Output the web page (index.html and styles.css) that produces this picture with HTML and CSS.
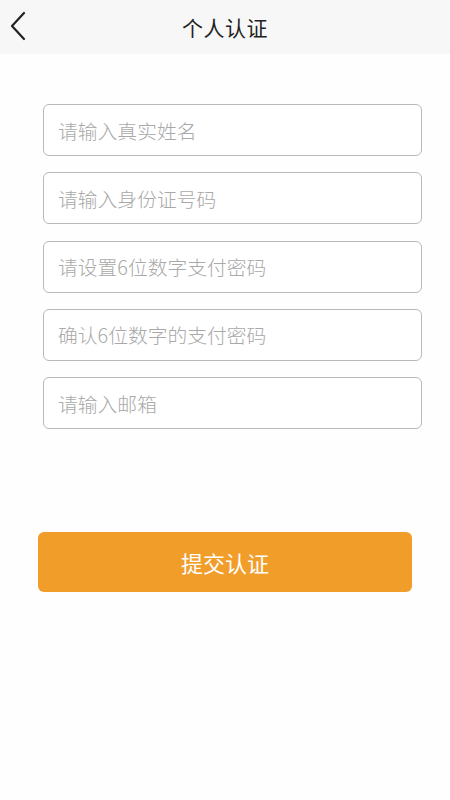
FILE: index.html
```html
<!DOCTYPE html>
<html lang="zh">
<head>
<meta charset="utf-8">
<title>个人认证</title>
<link rel="stylesheet" href="styles.css">
</head>
<body>
<div class="page">
  <header class="nav">
    <span class="back">
      <svg width="20" height="30" viewBox="0 0 20 30"><path d="M15 2 L3 15 L15 28" fill="none" stroke="#222" stroke-width="2.2" stroke-linecap="round" stroke-linejoin="round"/></svg>
    </span>
    <h1 class="title">个人认证</h1>
  </header>
  <form class="form">
    <input class="field" type="text" placeholder="请输入真实姓名">
    <input class="field" type="text" placeholder="请输入身份证号码">
    <input class="field" type="password" placeholder="请设置6位数字支付密码">
    <input class="field" type="password" placeholder="确认6位数字的支付密码">
    <input class="field" type="text" placeholder="请输入邮箱">
  </form>
  <div class="actions">
    <button class="submit" type="button">提交认证</button>
  </div>
</div>
</body>
</html>
```
FILE: styles.css
```css
* { box-sizing: border-box; }
html, body { margin: 0; padding: 0; background: #fefefe; }
body { font-family: "Noto Sans CJK SC", "Noto Sans", sans-serif; }
.page { width: 450px; min-height: 800px; }
.nav {
  position: relative;
  height: 54px;
  background: #f7f7f7;
  display: flex;
  align-items: center;
  justify-content: center;
}
.back {
  position: absolute;
  left: 9px;
  top: 11px;
  display: flex;
}
.title {
  margin: 0;
  font-size: 21px;
  font-weight: 400;
  color: #222;
  letter-spacing: 0.5px;
}
.form {
  display: flex;
  flex-direction: column;
  gap: 16.25px;
  padding: 50px 28px 0 43px;
}
.field {
  width: 379px;
  height: 52px;
  border: 1.5px solid #b9b9b9;
  border-radius: 6px;
  padding: 0 0 0 14px;
  font-family: inherit;
  font-size: 19.8px;
  font-weight: 300;
  color: #333;
  background: #fff;
  outline: none;
}
.field::placeholder { color: #a9a9a9; }
.actions { padding: 103px 0 0 38px; }
.submit {
  width: 374px;
  height: 60px;
  border: none;
  border-radius: 6px;
  background: #f19d2a;
  color: #fff;
  font-family: inherit;
  font-size: 22px;
}
```
